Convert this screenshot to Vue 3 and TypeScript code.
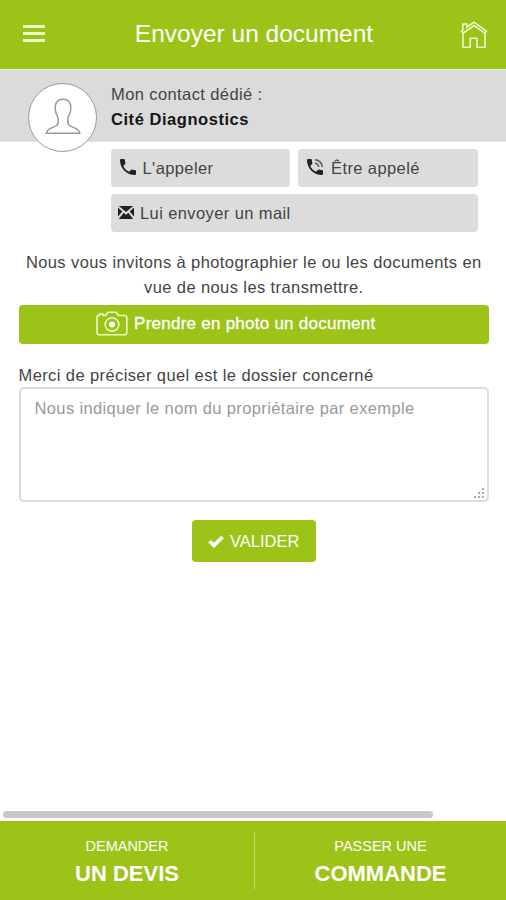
<script setup lang="ts">
import { ref } from 'vue'

interface FooterAction {
  small: string
  large: string
}

const dossier = ref<string>('')
const footerActions: FooterAction[] = [
  { small: 'DEMANDER', large: 'UN DEVIS' },
  { small: 'PASSER UNE', large: 'COMMANDE' },
]
</script>

<template>
  <div class="screen">
    <header class="topbar">
      <button class="menu" aria-label="Menu"><i></i><i></i><i></i></button>
      <h1>Envoyer un document</h1>
      <svg class="home" viewBox="0 0 28 28" aria-hidden="true">
        <path d="M2.800 9.600V3h4v3.200L14 1.200l12.400 9-1.500 2L14 4.600 3.200 12.200l-1.600-2z" />
        <path d="M3 12.600v13.600h7.200v-9h6.800v9h8V12.600" />
      </svg>
    </header>

    <section class="contact">
      <div class="avatar">
        <svg viewBox="0 0 36 38" aria-hidden="true">
          <path d="M18 1.200c-5.200 0-8 3.200-7.800 8.200.1 3 .4 5.600 1.500 7.600.8 1.500 1.600 2.500 1.600 4.500 0 2.500.1 4.600-1.500 6-2.500 2.100-9.600 1.900-10.600 7.800h33.600c-1-5.900-8.100-5.700-10.600-7.800-1.600-1.400-1.500-3.500-1.500-6 0-2 .8-3 1.600-4.500 1.100-2 1.400-4.600 1.500-7.600.2-5-2.600-8.200-7.800-8.200z" />
        </svg>
      </div>
      <div class="who">
        <span>Mon contact dédié :</span>
        <strong>Cité Diagnostics</strong>
      </div>
    </section>

    <section class="actions">
      <button class="grey">
        <svg class="phone" viewBox="3 3 18 18" aria-hidden="true">
          <path d="M6.620 10.790c1.440 2.830 3.760 5.140 6.590 6.590l2.200-2.200c.27-.27.67-.36 1.020-.24 1.120.37 2.330.57 3.570.57.55 0 1 .45 1 1V20c0 .55-.45 1-1 1C10.610 21 3 13.390 3 4c0-.55.45-1 1-1h3.500c.55 0 1 .45 1 1 0 1.250.2 2.450.57 3.570.11.35.03.74-.25 1.020z" />
        </svg>
        <span>L'appeler</span>
      </button>
      <button class="grey second">
        <svg class="phone" viewBox="3 3 18 18" aria-hidden="true">
          <path d="M6.620 10.790c1.440 2.830 3.760 5.140 6.590 6.590l2.200-2.200c.27-.27.67-.36 1.020-.24 1.120.37 2.330.57 3.570.57.55 0 1 .45 1 1V20c0 .55-.45 1-1 1C10.610 21 3 13.390 3 4c0-.55.45-1 1-1h3.500c.55 0 1 .45 1 1 0 1.250.2 2.450.57 3.570.11.35.03.74-.25 1.020z" />
          <path class="wave" d="M19 12h2a9 9 0 0 0-9-9v2a7 7 0 0 1 7 7zM15 12h2a5 5 0 0 0-5-5v2a3 3 0 0 1 3 3z" />
        </svg>
        <span>Être appelé</span>
      </button>
      <button class="grey mail">
        <svg class="envelope" viewBox="0 0 16 13" aria-hidden="true">
          <path d="M.8 0h14.400L8 6zM0 1.600 4.300 5.500 0 10.400zM16 1.600v8.800l-4.300-4.900zM5.700 6.800 8 8.700l2.300-1.900 4.900 6.200H.8z" />
        </svg>
        <span>Lui envoyer un mail</span>
      </button>
    </section>

    <main class="form">
      <p>Nous vous invitons à photographier le ou les documents en<br />vue de nous les transmettre.</p>
      <button class="photo">
        <svg viewBox="0 0 32 25" aria-hidden="true">
          <path d="M2.500 4.500h1V3h3.500v1.500h2.500l2.500-3.300h8l2.500 3.300h6c1.400 0 2.300.8 2.300 2.100v15c0 1.400-.8 2.200-2.200 2.200H3.200C1.800 23.800 1 23 1 21.600V6.300c0-1.100.5-1.800 1.500-1.800z" />
          <circle cx="16" cy="13.500" r="6.800" />
          <circle class="lens" cx="16" cy="13.500" r="3" />
        </svg>
        <span>Prendre en photo un document</span>
      </button>
      <label for="dossier">Merci de préciser quel est le dossier concerné</label>
      <div class="field">
        <textarea id="dossier" v-model="dossier" placeholder="Nous indiquer le nom du propriétaire par exemple"></textarea>
        <svg class="grip" viewBox="0 0 11 11" aria-hidden="true">
          <path d="M8 0h2v2H8zM4 4h2v2H4zM8 4h2v2H8zM0 8h2v2H0zM4 8h2v2H4zM8 8h2v2H8z" />
        </svg>
      </div>
      <button class="submit">
        <svg viewBox="0 0 16 13" aria-hidden="true"><path d="M1.500 6.200 6 10.400 14.500 2" /></svg>
        <span>VALIDER</span>
      </button>
    </main>

    <div class="scrollbar"></div>
    <footer>
      <button v-for="action in footerActions" :key="action.large">
        <span>{{ action.small }}</span>
        <strong>{{ action.large }}</strong>
      </button>
    </footer>
  </div>
</template>

<style>
body {
  margin: 0;
}
</style>

<style scoped>
* {
  box-sizing: border-box;
}
.screen {
  display: flex;
  flex-direction: column;
  width: 506px;
  height: 900px;
  overflow: hidden;
  background: #fff;
  color: #444;
  font: 16.500px/24.500px "Liberation Sans", Arial, sans-serif;
  letter-spacing: 0.4px;
}
button {
  display: flex;
  align-items: center;
  padding: 0;
  border: 0;
  font: inherit;
  letter-spacing: inherit;
  color: inherit;
  white-space: nowrap;
}
svg {
  flex: none;
}
.topbar {
  display: flex;
  align-items: center;
  justify-content: space-between;
  height: 69px;
  padding: 0 18px 0 23px;
  background: #9dc318;
  color: #fff;
}
.menu {
  flex-direction: column;
  gap: 4px;
  width: 22px;
  margin-top: -2px;
  background: none;
}
.menu i {
  width: 22px;
  height: 3px;
  background: #f0f8cd;
}
h1 {
  margin: 0 0 0 3px;
  font-size: 24.500px;
  font-weight: 400;
  letter-spacing: 0;
}
.home {
  width: 28px;
  height: 28px;
  fill: none;
  stroke: #eef7c8;
  stroke-width: 1.600;
}
.contact {
  display: flex;
  flex: none;
  gap: 14px;
  height: 73px;
  padding: 13px 0 0 28px;
  border-top: 1px solid #e9ecd8;
  border-bottom: 1px solid #e5e5e5;
  background: #dbdbdb;
}
.avatar {
  display: grid;
  place-items: center;
  flex: none;
  width: 69px;
  height: 69px;
  border: 1.500px solid #999;
  border-radius: 50%;
  background: #fff;
}
.avatar svg {
  width: 36px;
  height: 38px;
  margin-top: -2px;
  fill: none;
  stroke: #999;
  stroke-width: 1.500;
}
.who {
  display: flex;
  flex-direction: column;
  margin-top: -1px;
}
.who strong {
  color: #161616;
  letter-spacing: 0.550px;
}
.actions {
  display: grid;
  grid-template-columns: 179.500px 179.500px;
  gap: 7px 8px;
  padding: 7px 0 0 110.500px;
}
.grey {
  gap: 7px;
  height: 38px;
  padding-left: 9px;
  border-radius: 4px;
  background: #dcdcdc;
}
.grey.second {
  gap: 8px;
}
.grey.mail {
  grid-column: 1 / 3;
  gap: 6px;
  padding-left: 7.500px;
}
.phone {
  width: 16px;
  height: 16px;
  margin-top: -2px;
  fill: #222;
}
.phone .wave {
  fill: #666;
}
.envelope {
  width: 16px;
  height: 13px;
  margin-top: -1px;
  fill: #222;
}
.form {
  display: flex;
  flex-direction: column;
  padding: 18px 17px 0 18.500px;
}
.form p {
  margin: 0;
  text-align: center;
}
.photo {
  justify-content: center;
  gap: 6px;
  height: 39px;
  margin-top: 6px;
  padding-right: 36px;
  border-radius: 4px;
  background: #9dc318;
  color: #fff;
  font-size: 17px;
  letter-spacing: 0.250px;
  -webkit-text-stroke: 0.300px #fff;
}
.photo svg {
  width: 32px;
  height: 25px;
  margin-top: -3px;
  fill: none;
  stroke: #eef7c8;
  stroke-width: 1.600;
}
.photo .lens {
  fill: #fff;
  stroke: none;
}
label {
  margin-top: 18.500px;
}
.field {
  position: relative;
  height: 115px;
}
textarea {
  display: block;
  width: 100%;
  height: 115px;
  padding: 7px 14px;
  border: 2px solid #dcdcdc;
  border-radius: 5px;
  background: #fff;
  font: inherit;
  letter-spacing: 0.370px;
  resize: none;
  outline: 0;
}
textarea::placeholder {
  color: #999;
  opacity: 1;
}
.grip {
  position: absolute;
  right: 4px;
  bottom: 3px;
  width: 11px;
  height: 11px;
  fill: #aaa;
}
.submit {
  align-self: center;
  justify-content: center;
  gap: 6px;
  width: 124px;
  height: 42px;
  margin: 18px 0 0;
  border-radius: 4px;
  background: #9dc318;
  color: #fff;
  font-size: 16.500px;
  letter-spacing: 0;
}
.submit svg {
  width: 16px;
  height: 13px;
  fill: none;
  stroke: #fff;
  stroke-width: 3.600;
}
.scrollbar {
  width: 430px;
  height: 7px;
  margin: auto 0 3px 3px;
  border-radius: 4px;
  background: #c8c8c8;
}
footer {
  display: grid;
  grid-template-columns: 255px 251px;
  flex: none;
  height: 79px;
  padding: 11px 0;
  background: #9dc318;
  color: #fff;
}
footer button {
  flex-direction: column;
  background: none;
}
footer button:first-child {
  border-right: 1px solid #c9df75;
}
footer span {
  margin-top: 2px;
  font-size: 14.500px;
  letter-spacing: 0;
}
footer strong {
  margin-top: 3px;
  font-size: 22px;
  letter-spacing: 0;
}
</style>
